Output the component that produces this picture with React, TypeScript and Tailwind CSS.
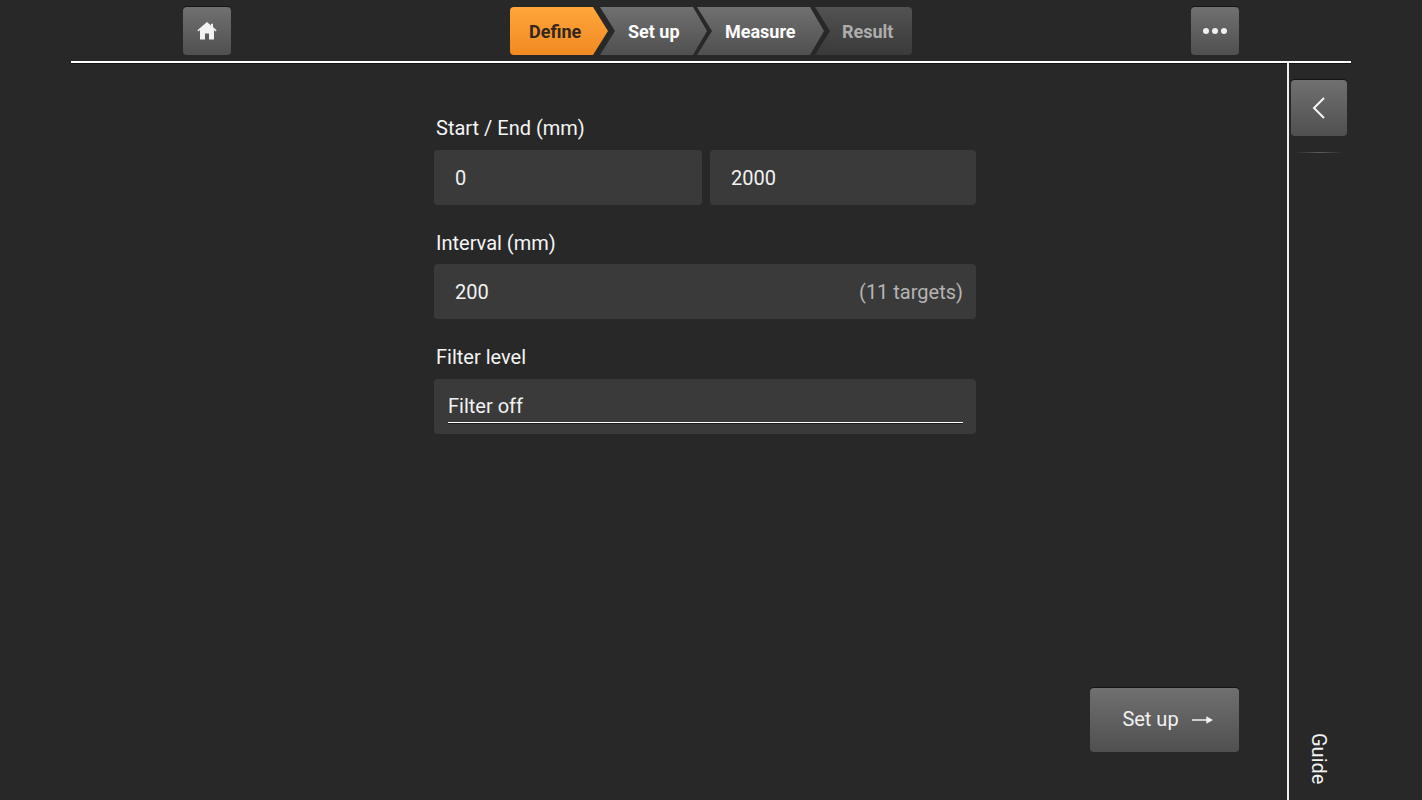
const buttonClass =
  "flex items-center justify-center rounded-[4px] bg-gradient-to-b from-[#707070] to-[#505050] shadow-[0_-1px_0_#141414]";

export default function App() {
  return (
    <div className="h-screen overflow-hidden bg-[#282828] px-[71px] text-white font-['Roboto',sans-serif] flex flex-col">
      {/* Top bar */}
      <header className="h-[63px] shrink-0 pt-[7px] px-[112px] border-b-2 border-white flex justify-between items-start shadow-[0_1px_0_#141414]">
        <button className={`${buttonClass} w-[48px] h-[48px]`}>
          <HomeIcon />
        </button>
        <Stepper />
        <button className={`${buttonClass} w-[48px] h-[48px] gap-[3px]`}>
          <span className="w-[6px] h-[6px] rounded-full bg-[#f0f0f0]"></span>
          <span className="w-[6px] h-[6px] rounded-full bg-[#f0f0f0]"></span>
          <span className="w-[6px] h-[6px] rounded-full bg-[#f0f0f0]"></span>
        </button>
      </header>

      <div className="flex flex-1 min-h-0">
        {/* Form */}
        <main className="flex-1 flex flex-col justify-between">
          <div className="ml-[363px] mt-[52px] w-[542px]">
            <Label className="pb-[9px]">Start / End (mm)</Label>
            <div className="flex gap-2">
              <Field className="w-[268px]" value="0" />
              <Field className="flex-1" value="2000" />
            </div>
            <Label className="mt-[24px] pb-[8px]">Interval (mm)</Label>
            <Field value="200" hint="(11 targets)" />
            <Label className="mt-[25px] pb-[9px]">Filter level</Label>
            <div className="h-[55px] rounded-[4px] bg-[#3a3a3a] pl-[14px] pr-[13px]">
              <div className="h-[44px] pt-[14px] border-b border-white text-[20px] leading-[26px] text-[#f2f2f2] shadow-[0_1px_0_#1c1c1c]">
                Filter off
              </div>
            </div>
          </div>
          <button className={`${buttonClass} self-end mr-[48px] mb-[48px] w-[149px] h-[64px] pl-[6px] gap-[14px] text-[20px] text-[#f2f2f2]`}>
            <span className="pb-[2px]">Set up</span>
            <ArrowIcon />
          </button>
        </main>

        {/* Guide rail */}
        <aside className="w-[64px] shrink-0 border-l-2 border-[#f0f0f0] pl-[2px] flex flex-col items-start">
          <button className={`${buttonClass} mt-[17px] w-[56px] h-[56px]`}>
            <svg width="14" height="24" viewBox="0 0 14 24" fill="none">
              <path d="M12 2 2 12l10 10" stroke="#f5f5f5" strokeWidth="2" />
            </svg>
          </button>
          <div className="mt-[16px] ml-[4px] w-[48px] h-px bg-gradient-to-r from-transparent via-[#5c5c5c] to-transparent"></div>
          <div className="mt-auto mb-[16px] ml-[16px] [writing-mode:vertical-rl] text-[20px] leading-[24px] text-[#f2f2f2]">
            Guide
          </div>
        </aside>
      </div>
    </div>
  );
}

function Stepper() {
  return (
    <nav className="flex h-[48px] text-[18px] font-bold">
      <div className="w-[98px] pl-[19px] flex items-center rounded-l-[4px] bg-gradient-to-b from-[#ffa63a] to-[#f08a22] text-[#33261a] [clip-path:polygon(0_0,83px_0,98px_50%,83px_100%,0_100%)]">
        Define
      </div>
      <div className="w-[107px] -ml-[8px] pl-[28px] flex items-center bg-gradient-to-b from-[#707070] to-[#505050] text-white [clip-path:polygon(0_0,93px_0,107px_50%,93px_100%,0_100%,15px_50%)]">
        Set up
      </div>
      <div className="w-[127px] -ml-[10px] pl-[28px] flex items-center bg-gradient-to-b from-[#707070] to-[#505050] text-white [clip-path:polygon(0_0,113px_0,127px_50%,113px_100%,0_100%,15px_50%)]">
        Measure
      </div>
      <div className="w-[97px] -ml-[9px] pl-[27px] flex items-center rounded-r-[4px] bg-gradient-to-b from-[#525252] to-[#3a3a3a] text-[#adadad] [clip-path:polygon(0_0,100%_0,100%_100%,0_100%,15px_50%)]">
        Result
      </div>
    </nav>
  );
}

function Label({ children, className = "" }: { children: string; className?: string }) {
  return (
    <div className={`pl-[2px] h-[35px] flex items-end text-[20px] leading-[26px] text-[#f5f5f5] ${className}`}>
      {children}
    </div>
  );
}

function Field({ value, hint, className = "" }: { value: string; hint?: string; className?: string }) {
  return (
    <div className={`h-[55px] rounded-[4px] bg-[#3a3a3a] pl-[21px] pr-[13px] flex items-center justify-between text-[20px] text-[#f2f2f2] ${className}`}>
      <span>{value}</span>
      {hint && <span className="pt-px text-[#b4b4b4]">{hint}</span>}
    </div>
  );
}

function HomeIcon() {
  return (
    <svg width="20" height="20" viewBox="0 0 20 20" fill="#f2f2f2">
      <path fillRule="evenodd" d="M10 1 14 4.4V2.8H16V6.1L19.6 9.2 18.6 10.4 17 9.1V18.5H3V9.1L1.4 10.4 0.4 9.2ZM8 12.5V18.5H12V12.5Z" />
    </svg>
  );
}

function ArrowIcon() {
  return (
    <svg className="-ml-px" width="21" height="10" viewBox="0 0 22 10" fill="#f2f2f2">
      <path d="M0 4.2H15V1L22 5 15 9V5.8H0Z" />
    </svg>
  );
}
